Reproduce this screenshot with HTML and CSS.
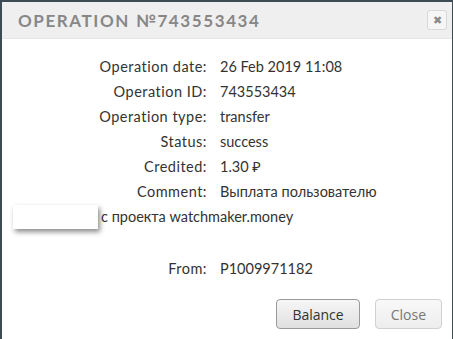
FILE: index.html
```html
<!DOCTYPE html>
<html lang="en">

<head>
    <meta charset="UTF-8">
    <title>Operation №743553434</title>
    <link rel="stylesheet" href="styles.css">
</head>

<body>
    <div class="modal">
        <!-- Cabecera del diálogo -->
        <div class="modal-header">
            <h2>Operation №743553434</h2>
            <button class="close-x" title="Close">&#10006;</button>
        </div>

        <!-- Detalles de la operación -->
        <div class="modal-body">
            <div class="details">
                <span class="label">Operation date:</span><span class="value">26 Feb 2019 11:08</span>
                <span class="label">Operation ID:</span><span class="value">743553434</span>
                <span class="label">Operation type:</span><span class="value">transfer</span>
                <span class="label">Status:</span><span class="value">success</span>
                <span class="label">Credited:</span><span class="value">1.30 &#8381;</span>
                <span class="label">Comment:</span><span class="value">Выплата пользователю</span>
            </div>
            <div class="comment-wrap">
                <span class="hidden-name"></span>
                <span>с проекта watchmaker.money</span>
            </div>
            <div class="details from">
                <span class="label">From:</span><span class="value">P1009971182</span>
            </div>
        </div>

        <!-- Botones -->
        <div class="modal-footer">
            <button class="btn">Balance</button>
            <button class="btn btn-light">Close</button>
        </div>
    </div>
</body>

</html>
```

FILE: styles.css
```css
/* Fondo oscuro detrás del diálogo */
body {
    margin: 0;
    background: #3d4b55;
    font-family: 'Lato', 'Noto Sans', sans-serif;
    overflow: hidden;
}

.modal {
    margin: 2px 1px 0 2px;
    background: #ffffff;
    height: 400px;
}

/* Cabecera */
.modal-header {
    display: flex;
    align-items: center;
    justify-content: space-between;
    height: 36px;
    padding: 0 5px 0 16px;
    background: #efefef;
    border-bottom: 1px solid #e6e6e6;
}

.modal-header h2 {
    margin: 0;
    font-size: 17px;
    font-weight: bold;
    letter-spacing: 1.6px;
    text-transform: uppercase;
    color: #878787;
}

.close-x {
    width: 20px;
    height: 20px;
    padding: 0;
    border: 1px solid #d8d8d8;
    border-radius: 3px;
    background: #f6f6f6;
    color: #8c8c8c;
    font-size: 11px;
    line-height: 18px;
    cursor: pointer;
}

/* Tabla de detalles */
.modal-body {
    padding-top: 15px;
    color: #333;
    font-size: 14.5px;
}

.details {
    display: grid;
    grid-template-columns: 205px 1fr;
    column-gap: 13px;
}

.details span {
    line-height: 25px;
}

.label {
    text-align: right;
    letter-spacing: 0.5px;
}

.comment-wrap {
    display: flex;
    align-items: center;
    gap: 3px;
    height: 25px;
    padding-left: 11px;
}

.hidden-name {
    width: 85px;
    height: 24px;
    background: #fff;
    box-shadow: 2px 3px 5px rgba(0, 0, 0, 0.45);
}

.from {
    margin-top: 27px;
}

/* Pie con botones */
.modal-footer {
    display: flex;
    justify-content: flex-end;
    gap: 15px;
    margin-top: 18px;
    padding-right: 10px;
}

.btn {
    height: 30px;
    padding: 0 15px;
    font-family: 'Open Sans', sans-serif;
    font-size: 14px;
    color: #333;
    background: linear-gradient(to bottom, #f6f6f6, #e0e0e0);
    border: 1px solid #9a9a9a;
    border-radius: 4px;
    cursor: pointer;
}

.btn-light {
    color: #777;
    background: linear-gradient(to bottom, #f9f9f9, #ededed);
    border-color: #d0d0d0;
}
```
